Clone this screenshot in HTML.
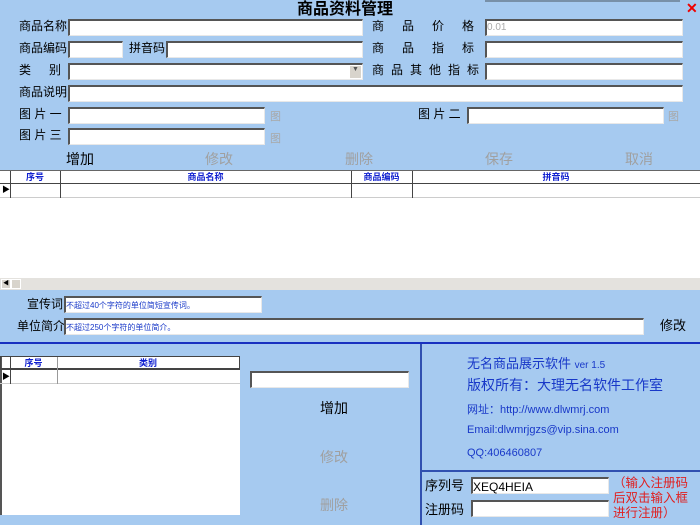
<!DOCTYPE html>
<html><head><meta charset="utf-8"><style>
*{margin:0;padding:0;box-sizing:border-box}
body{width:700px;height:525px;background:#a6caf0;position:relative;overflow:hidden;font-family:"Liberation Sans","Noto Sans CJK SC","WenQuanYi Zen Hei",sans-serif;font-size:12px;color:#000}
.a{position:absolute;white-space:nowrap}
.in{position:absolute;background:#fff;border-top:2px solid #555;border-left:2px solid #555;border-bottom:1px solid #e8e8e8;border-right:1px solid #e8e8e8;height:17px}
.l{position:absolute;font-size:12px;line-height:14px;white-space:nowrap}
.b{position:absolute;font-size:14px;line-height:16px;color:#a0a0a0}
.ic{position:absolute;font-size:11px;color:#a8a8a8}
.hd{position:absolute;font-size:9px;font-weight:bold;color:#1020d0;text-align:center;line-height:12px}
.blue{color:#1838c8}
</style></head><body>
<div class="a" style="left:297px;top:0;font-size:16px;line-height:19px;font-weight:bold">商品资料管理</div>
<div class="a" style="left:485px;top:0;width:195px;height:2px;background:#7890a8"></div>
<div class="a" style="left:686px;top:0;color:#e00;font-weight:bold;font-size:14px">✕</div>

<div class="l" style="left:19px;top:19px">商品名称</div><div class="in" style="left:68px;top:19px;width:295px"></div>
<div class="l" style="left:372px;top:19px">商&emsp;&ensp;品&emsp;&ensp;价&emsp;&ensp;格</div>
<div class="in" style="left:485px;top:19px;width:198px"><span style="color:#aaa;font-size:10px;position:absolute;top:1px">0.01</span></div>

<div class="l" style="left:19px;top:41px">商品编码</div><div class="in" style="left:68px;top:41px;width:55px"></div>
<div class="l" style="left:129px;top:41px">拼音码</div><div class="in" style="left:166px;top:41px;width:197px"></div>
<div class="l" style="left:372px;top:41px">商&emsp;&ensp;品&emsp;&ensp;指&emsp;&ensp;标</div><div class="in" style="left:485px;top:41px;width:198px"></div>

<div class="l" style="left:19px;top:63px">类&emsp;&ensp;别</div><div class="in" style="left:68px;top:63px;width:295px"><div style="position:absolute;right:1px;top:1px;width:11px;height:12px;background:#d8d4cc;font-size:7px;text-align:center;color:#555">▼</div></div>
<div class="l" style="left:372px;top:63px;letter-spacing:7px">商品其他指标</div><div class="in" style="left:485px;top:63px;width:198px"></div>

<div class="l" style="left:19px;top:85px">商品说明</div><div class="in" style="left:68px;top:85px;width:615px"></div>

<div class="l" style="left:19px;top:107px">图&nbsp;片&nbsp;一</div><div class="in" style="left:68px;top:107px;width:197px"></div><div class="ic" style="left:270px;top:108px">图</div>
<div class="l" style="left:418px;top:107px">图&nbsp;片&nbsp;二</div><div class="in" style="left:467px;top:107px;width:197px"></div><div class="ic" style="left:668px;top:108px">图</div>
<div class="l" style="left:19px;top:128px">图&nbsp;片&nbsp;三</div><div class="in" style="left:68px;top:128px;width:197px"></div><div class="ic" style="left:270px;top:130px">图</div>

<div class="b" style="left:66px;top:151px;color:#000">增加</div>
<div class="b" style="left:205px;top:151px">修改</div>
<div class="b" style="left:345px;top:151px">删除</div>
<div class="b" style="left:485px;top:151px">保存</div>
<div class="b" style="left:625px;top:151px">取消</div>

<div class="a" style="left:0;top:170px;width:700px;height:108px;background:#fff;border-top:1px solid #666"></div>
<div class="a" style="left:0;top:183px;width:700px;height:1px;background:#444"></div>
<div class="a" style="left:0;top:197px;width:700px;height:1px;background:#ccc"></div>
<div class="a" style="left:10px;top:171px;width:1px;height:27px;background:#444"></div>
<div class="a" style="left:60px;top:171px;width:1px;height:27px;background:#444"></div>
<div class="a" style="left:351px;top:171px;width:1px;height:27px;background:#444"></div>
<div class="a" style="left:412px;top:171px;width:1px;height:27px;background:#444"></div>
<div class="hd" style="left:10px;top:171px;width:50px">序号</div>
<div class="hd" style="left:60px;top:171px;width:291px">商品名称</div>
<div class="hd" style="left:351px;top:171px;width:61px">商品编码</div>
<div class="hd" style="left:412px;top:171px;width:288px">拼音码</div>
<div class="a" style="left:2px;top:184px;font-size:8px">▶</div>
<div class="a" style="left:0;top:278px;width:700px;height:12px;background:#e4e2de"></div>
<div class="a" style="left:1px;top:279px;width:10px;height:10px;background:#d8d4cc;border:1px solid #fff;font-size:6px;line-height:8px;text-align:center">◀</div>
<div class="a" style="left:11px;top:279px;width:10px;height:10px;background:#d8d4cc;border:1px solid #fff"></div>

<div class="l" style="left:27px;top:297px;font-size:12px">宣传词</div>
<div class="in" style="left:64px;top:296px;width:198px"><span class="blue" style="font-size:8px;position:absolute;top:2px">不超过40个字符的单位简短宣传词。</span></div>
<div class="l" style="left:17px;top:319px">单位简介</div>
<div class="in" style="left:64px;top:318px;width:580px"><span class="blue" style="font-size:8px;position:absolute;top:2px">不超过250个字符的单位简介。</span></div>
<div class="b" style="left:660px;top:318px;color:#000;font-size:13px">修改</div>

<div class="a" style="left:0;top:342px;width:700px;height:2px;background:#1830c0"></div>
<div class="a" style="left:420px;top:344px;width:2px;height:181px;background:#3050b0"></div>
<div class="a" style="left:422px;top:470px;width:278px;height:2px;background:#3050b0"></div>

<div class="a" style="left:0;top:356px;width:240px;height:159px;background:#fff;border-left:2px solid #555"></div>
<div class="a" style="left:0;top:356px;width:240px;height:14px;border:1px solid #444;border-bottom:2px solid #444"></div>
<div class="a" style="left:0;top:383px;width:240px;height:1px;background:#ccc"></div>
<div class="a" style="left:10px;top:357px;width:1px;height:27px;background:#444"></div>
<div class="a" style="left:57px;top:357px;width:1px;height:27px;background:#999"></div>
<div class="hd" style="left:10px;top:357px;width:47px">序号</div>
<div class="hd" style="left:57px;top:357px;width:182px">类别</div>
<div class="a" style="left:2px;top:371px;font-size:8px">▶</div>

<div class="in" style="left:250px;top:371px;width:159px"></div>
<div class="b" style="left:320px;top:400px;color:#000">增加</div>
<div class="b" style="left:320px;top:449px">修改</div>
<div class="b" style="left:320px;top:497px">删除</div>

<div class="a blue" style="left:467px;top:353px;font-size:13px">无名商品展示软件 <span style="font-size:10px">ver 1.5</span></div>
<div class="a blue" style="left:467px;top:375px;font-size:14px">版权所有：大理无名软件工作室</div>
<div class="a blue" style="left:467px;top:401px;font-size:11px">网址：http://www.dlwmrj.com</div>
<div class="a blue" style="left:467px;top:424px;font-size:11px">Email:dlwmrjgzs@vip.sina.com</div>
<div class="a blue" style="left:467px;top:447px;font-size:11px">QQ:406460807</div>

<div class="l" style="left:425px;top:479px;font-size:13px">序列号</div>
<div class="in" style="left:471px;top:477px;width:138px"><span style="position:absolute;top:1px;font-size:12px">XEQ4HEIA</span></div>
<div class="l" style="left:425px;top:503px;font-size:13px">注册码</div>
<div class="in" style="left:471px;top:500px;width:138px"></div>
<div class="a" style="left:613px;top:476px;color:#e02020;font-size:12.5px;line-height:15px;white-space:normal;width:90px">（输入注册码<br>后双击输入框<br>进行注册）</div>
</body></html>
